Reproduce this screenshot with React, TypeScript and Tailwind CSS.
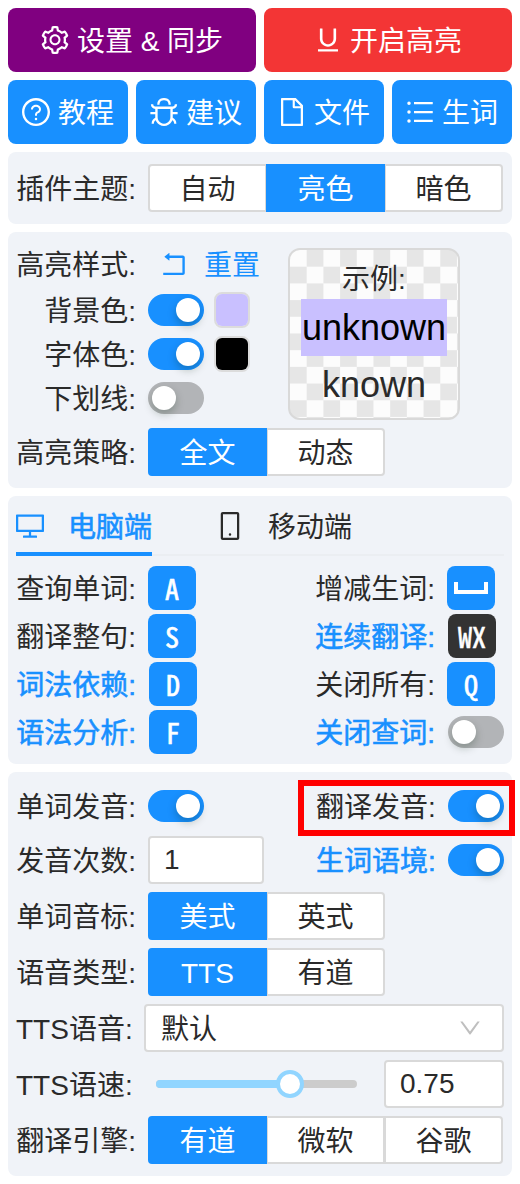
import type { ReactNode } from "react";
import {
  AiOutlineBug,
  AiOutlineDesktop,
  AiOutlineDown,
  AiOutlineFile,
  AiOutlineMobile,
  AiOutlineQuestionCircle,
  AiOutlineRollback,
  AiOutlineSetting,
  AiOutlineUnderline,
  AiOutlineUnorderedList,
} from "react-icons/ai";

function ActionButton({ color, icon, text }: { color: string; icon: ReactNode; text: string }) {
  return (
    <div className={`h-16 pr-[2px] rounded-lg flex items-center justify-center gap-[6px] text-white text-[28px] ${color}`}>
      {icon}
      <span className="pt-1">{text}</span>
    </div>
  );
}

function Toggle({ on = true }: { on?: boolean }) {
  return (
    <div className={`w-14 h-8 rounded-full p-1 flex shrink-0 ${on ? "bg-[#1890ff] justify-end" : "bg-[#b2b4b7] justify-start"}`}>
      <div className="w-6 h-6 rounded-full bg-white shadow-[0_4px_8px_rgba(0,35,11,0.25)]" />
    </div>
  );
}

function Segments({ items, active, className = "" }: { items: string[]; active?: number; className?: string }) {
  return (
    <div className={`flex h-12 ${className}`}>
      {items.map((item, i) => (
        <div
          key={item}
          className={`w-[119px] pt-1 flex items-center justify-center border-2 -ml-px first:ml-0 first:rounded-l last:rounded-r ${
            i === active ? "bg-[#1890ff] border-[#1890ff] text-white z-10" : "bg-white border-[#d9d9d9]"
          }`}
        >
          {item}
        </div>
      ))}
    </div>
  );
}

function Swatch({ color }: { color: string }) {
  return (
    <div className="w-9 h-9 ml-[10px] rounded-lg border-2 border-[#dcdcdc]">
      <div className={`w-full h-full rounded-md ${color}`} />
    </div>
  );
}

function Label({ children, blue = false }: { children: ReactNode; blue?: boolean }) {
  return (
    <span className={`w-[120px] shrink-0 pt-1 text-right whitespace-nowrap ${blue ? "text-[#1890ff] [-webkit-text-stroke:0.6px]" : ""}`}>
      {children}
    </span>
  );
}

function Key({ children, dark = false, shift = false }: { children: ReactNode; dark?: boolean; shift?: boolean }) {
  return (
    <div
      className={`w-12 h-11 rounded-lg flex items-center justify-center text-white text-[28px] font-medium [-webkit-text-stroke:0.6px] font-['Noto_Sans_Mono_CJK_SC','Liberation_Mono',monospace] ${
        dark ? "bg-[#333333] ml-[13px]" : "bg-[#1890ff] ml-3"
      } ${shift ? "ml-[13px]" : ""}`}
    >
      {children}
    </div>
  );
}

export default function App() {
  return (
    <div className="w-[520px] h-[1184px] bg-white p-2 flex flex-col gap-2 text-[28px] leading-none text-[#2a2a2a] font-['Liberation_Sans','Noto_Sans_CJK_SC',sans-serif]">
      {/* Top buttons */}
      <div className="grid grid-cols-2 gap-2">
        <ActionButton color="bg-[#800080]" icon={<AiOutlineSetting size={32} />} text="设置 & 同步" />
        <ActionButton color="bg-[#f33535]" icon={<AiOutlineUnderline size={32} />} text="开启高亮" />
      </div>
      <div className="grid grid-cols-4 gap-2">
        <ActionButton color="bg-[#1890ff]" icon={<AiOutlineQuestionCircle size={32} />} text="教程" />
        <ActionButton color="bg-[#1890ff]" icon={<AiOutlineBug size={32} />} text="建议" />
        <ActionButton color="bg-[#1890ff]" icon={<AiOutlineFile size={32} />} text="文件" />
        <ActionButton color="bg-[#1890ff]" icon={<AiOutlineUnorderedList size={32} />} text="生词" />
      </div>

      {/* Theme */}
      <div className="h-[72px] rounded-lg bg-[#f0f3f8] px-2 flex items-center">
        <Label>插件主题:</Label>
        <Segments items={["自动", "亮色", "暗色"]} active={1} className="ml-3 w-[356px]" />
      </div>

      {/* Highlight style */}
      <div className="h-[256px] rounded-lg bg-[#f0f3f8] px-2 pt-4">
        <div className="flex">
          <div className="w-[272px]">
            <div className="h-8 flex items-center">
              <Label>高亮样式:</Label>
              <div className="flex items-center gap-[14px] ml-[22px] text-[#1890ff]">
                <AiOutlineRollback size={32} />
                <span className="pt-1">重置</span>
              </div>
            </div>
            <div className="h-8 mt-[14px] flex items-center">
              <Label>背景色:</Label>
              <div className="ml-3"><Toggle /></div>
              <Swatch color="bg-[#c9c0ff]" />
            </div>
            <div className="h-8 mt-3 flex items-center">
              <Label>字体色:</Label>
              <div className="ml-3"><Toggle /></div>
              <Swatch color="bg-black" />
            </div>
            <div className="h-8 mt-3 flex items-center">
              <Label>下划线:</Label>
              <div className="ml-3"><Toggle on={false} /></div>
            </div>
          </div>
          <div className="w-[172px] h-[172px] rounded-xl border-2 border-[#d9d9d9] bg-[repeating-conic-gradient(#e6e6e6_0%_25%,#fcfcfc_0%_50%)] bg-[length:33.4px_33.4px] flex flex-col items-center">
            <span className="mt-4">示例:</span>
            <span className="mt-[5px] h-[57px] w-[146px] flex items-center justify-center bg-[#c9c0ff] text-black text-[36px]">unknown</span>
            <span className="mt-[11px] text-[36px]">known</span>
          </div>
        </div>
        <div className="flex items-center mt-2">
          <Label>高亮策略:</Label>
          <Segments items={["全文", "动态"]} active={0} className="ml-3" />
        </div>
      </div>

      {/* Shortcuts */}
      <div className="h-[268px] rounded-lg bg-[#f0f3f8] px-2 pt-[14px]">
        <div className="h-[46px] border-b-2 border-[#ebeef2] flex">
          <div className="w-[136px] h-[46px] border-b-4 border-[#1890ff] flex items-start text-[#1890ff]">
            <div className="h-8 -ml-[2px] flex items-center gap-[22px] whitespace-nowrap">
              <AiOutlineDesktop size={32} />
              <span className="pt-1 [-webkit-text-stroke:0.6px]">电脑端</span>
            </div>
          </div>
          <div className="h-8 ml-[62px] flex items-center gap-[22px] whitespace-nowrap">
            <AiOutlineMobile size={32} />
            <span className="pt-1">移动端</span>
          </div>
        </div>
        <div className="mt-[10px] grid grid-cols-[299px_1fr] gap-y-1">
          <div className="flex items-center h-11"><Label>查询单词:</Label><Key>A</Key></div>
          <div className="flex items-center h-11">
            <Label>增减生词:</Label>
            <Key>
              <svg width="34" height="12" viewBox="0 0 34 12" fill="none" stroke="currentColor" strokeWidth="4">
                <path d="M2 0v10h30V0" />
              </svg>
            </Key>
          </div>
          <div className="flex items-center h-11"><Label>翻译整句:</Label><Key>S</Key></div>
          <div className="flex items-center h-11"><Label blue>连续翻译:</Label><Key dark>WX</Key></div>
          <div className="flex items-center h-11"><Label blue>词法依赖:</Label><Key shift>D</Key></div>
          <div className="flex items-center h-11"><Label>关闭所有:</Label><Key>Q</Key></div>
          <div className="flex items-center h-11"><Label blue>语法分析:</Label><Key shift>F</Key></div>
          <div className="flex items-center h-11">
            <Label blue>关闭查词:</Label>
            <div className="ml-[13px]"><Toggle on={false} /></div>
          </div>
        </div>
      </div>

      {/* Voice */}
      <div className="relative h-[404px] rounded-lg bg-[#f0f3f8] px-2 pt-[18px]">
        <div className="absolute left-[290px] top-2 w-[217px] h-14 border-[6px] border-[#ff0000]" />
        <div className="h-8 flex items-center">
          <Label>单词发音:</Label>
          <div className="ml-3"><Toggle /></div>
          <span className="ml-[112px] pt-1 w-[120px] whitespace-nowrap">翻译发音:</span>
          <div className="ml-3"><Toggle /></div>
        </div>
        <div className="h-12 mt-[14px] flex items-center">
          <Label>发音次数:</Label>
          <div className="ml-3 w-[116px] h-12 bg-white border-2 border-[#d9d9d9] rounded flex items-center pl-[14px]">1</div>
          <span className="ml-[52px] pt-1 w-[120px] whitespace-nowrap text-[#1890ff] [-webkit-text-stroke:0.6px]">生词语境:</span>
          <div className="ml-3"><Toggle /></div>
        </div>
        <div className="flex items-center mt-2">
          <Label>单词音标:</Label>
          <Segments items={["美式", "英式"]} active={0} className="ml-3" />
        </div>
        <div className="flex items-center mt-2">
          <Label>语音类型:</Label>
          <Segments items={["TTS", "有道"]} active={0} className="ml-3" />
        </div>
        <div className="flex items-center mt-2">
          <span className="w-[120px] pt-1 shrink-0 whitespace-nowrap">TTS语音:</span>
          <div className="ml-2 w-[360px] h-12 bg-white border-2 border-[#d9d9d9] rounded flex items-center justify-between pl-[15px] pr-[19px]">
            <span className="pt-1">默认</span>
            <AiOutlineDown size={26} className="text-[#bfbfbf]" />
          </div>
        </div>
        <div className="flex items-center mt-2">
          <span className="w-[120px] pt-1 shrink-0 whitespace-nowrap">TTS语速:</span>
          <div className="ml-5 w-[201px] h-2 rounded-full bg-[#cccccc] flex items-center">
            <div className="w-[134px] h-2 rounded-full bg-[#91d5ff]" />
            <div className="w-7 h-7 -ml-[14px] rounded-full bg-white border-4 border-[#91d5ff] shrink-0" />
          </div>
          <div className="ml-[27px] w-[120px] h-12 bg-white border-2 border-[#d9d9d9] rounded flex items-center pl-[14px]">0.75</div>
        </div>
        <div className="flex items-center mt-2">
          <Label>翻译引擎:</Label>
          <Segments items={["有道", "微软", "谷歌"]} active={0} className="ml-3" />
        </div>
      </div>
    </div>
  );
}
